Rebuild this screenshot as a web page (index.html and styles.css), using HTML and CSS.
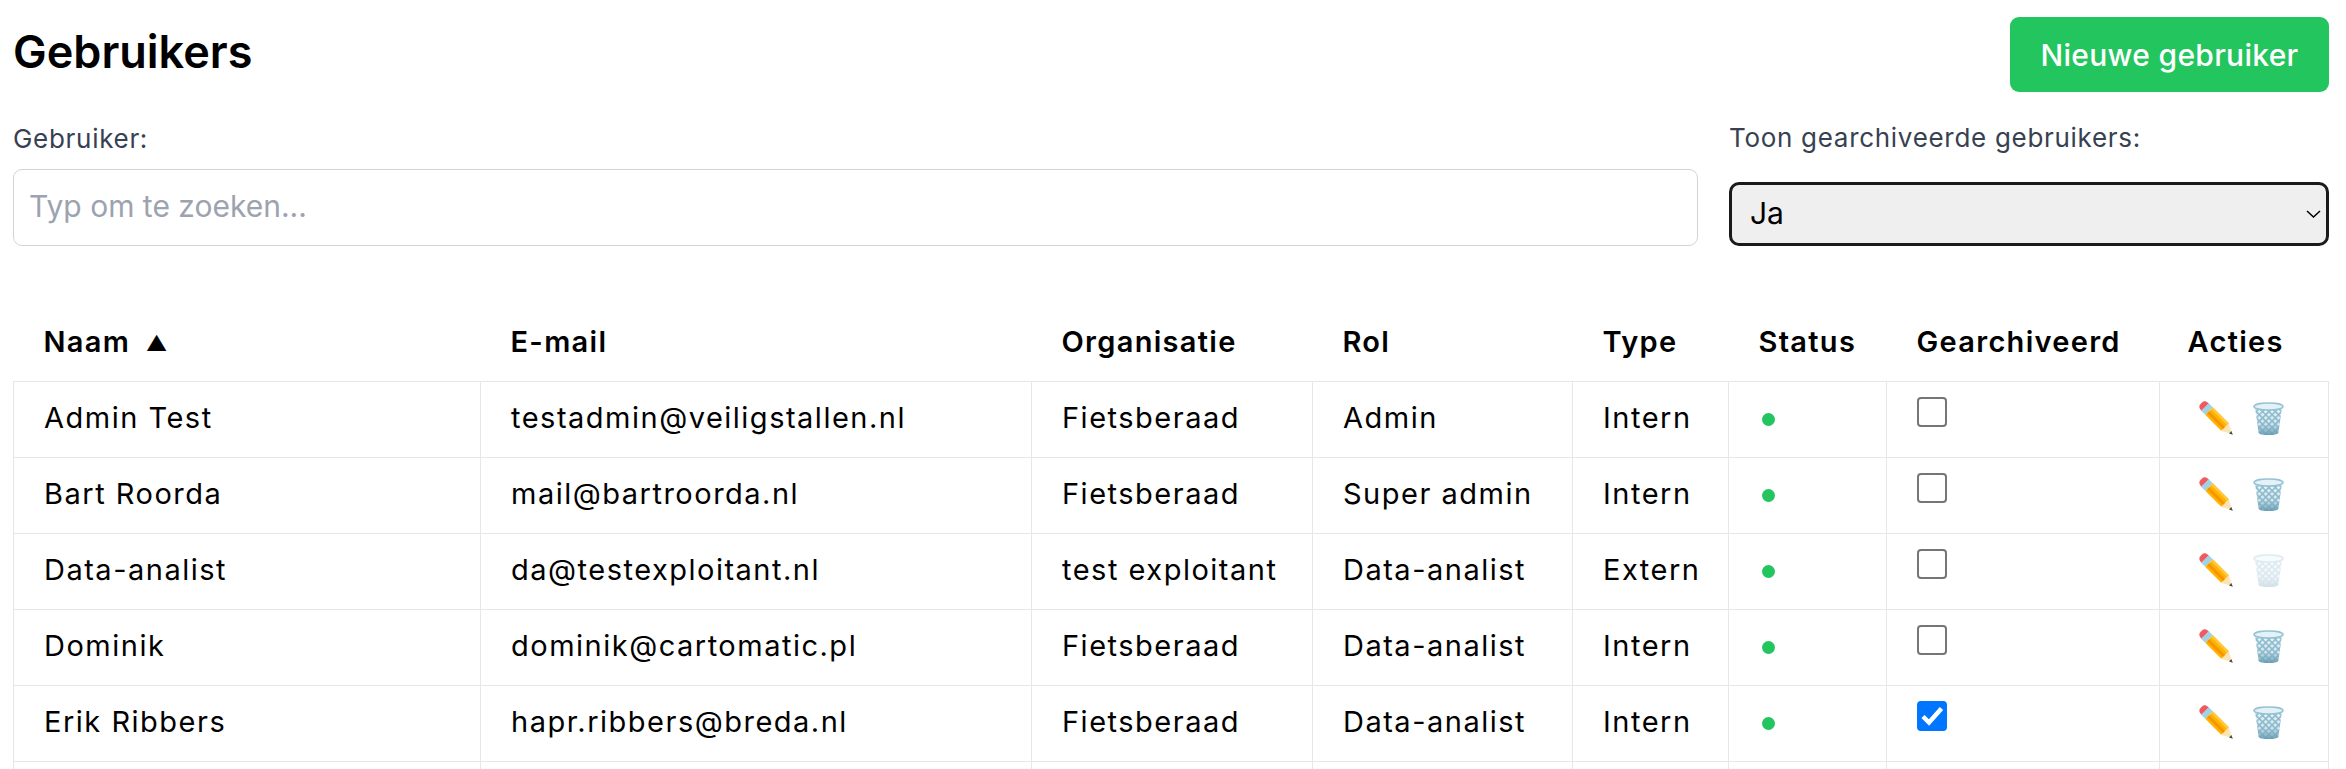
FILE: index.html
```html
<!DOCTYPE html>
<html lang="nl">
	<head>
		<meta charset="utf-8">
		<title>Gebruikers</title>
		<link rel="stylesheet" href="styles.css">
	</head>
	<body>
		<svg class="defs" width="0" height="0">
			<defs>
				<pattern id="mesh" width="4.500" height="4.500" patternUnits="userSpaceOnUse" patternTransform="rotate(45)">
					<rect width="4.500" height="4.500" fill="#8dbccf"/>
					<rect x="0.800" y="0.800" width="2.900" height="2.900" fill="#eef7fa"/>
				</pattern>
				<linearGradient id="fade" x1="0" y1="0" x2="0" y2="1">
					<stop offset="0" stop-color="#8dbccf" stop-opacity="0"/>
					<stop offset="0.6" stop-color="#7fb0c4" stop-opacity="0.25"/>
					<stop offset="1" stop-color="#6a9db3"/>
				</linearGradient>
				<symbol id="pencil" viewBox="0 0 34 34">
					<path d="M29.800 22.200 22.200 29.800 33.500 33.500z" fill="#fbe3b5"/>
					<path d="M32.400 30 30 32.400 33.800 33.800z" fill="#4a4a4a"/>
					<path d="M13.800 6.200 29.800 22.200 22.200 29.800 6.200 13.800z" fill="#ffb300"/>
					<path d="M13.800 6.200 29.800 22.200 28 24 12 8z" fill="#ffc93c"/>
					<path d="M10 10 26 26 24 28 8 12z" fill="#f59300"/>
					<path d="M9.800 2.200 13.800 6.200 6.200 13.800 2.200 9.800z" fill="#9fd3e4"/>
					<path d="M9.800 2.200 7 .6C5.500 0 4 .5 3 1.500L1.500 3C.5 4 0 5.500 .6 7L2.200 9.800z" fill="#ee5a63"/>
				</symbol>
				<symbol id="trash" viewBox="0 0 31 33">
					<path d="M2 5 5.500 30C5.800 32 8 33 15.500 33S25.200 32 25.500 30L29 5z" fill="url(#mesh)"/>
					<path d="M2 5 5.500 30C5.800 32 8 33 15.500 33S25.200 32 25.500 30L29 5z" fill="url(#fade)"/>
					<path d="M1 4.500C1 2.500 7.500 1 15.500 1S30 2.500 30 4.500 23.500 8 15.500 8 1 6.500 1 4.500z" fill="#e4f2f7" stroke="#94c3d4" stroke-width="1.500"/>
				</symbol>
			</defs>
		</svg>

		<div class="page">
			<div class="header">
				<h1 class="title">Gebruikers</h1>
				<button class="new_button" type="button">Nieuwe gebruiker</button>
			</div>

			<div class="filters">
				<div class="filter">
					<label class="filter_label label_search" for="search">Gebruiker:</label>
					<input class="search" id="search" type="text" placeholder="Typ om te zoeken...">
				</div>
				<div class="filter">
					<label class="filter_label label_select" for="archived">Toon gearchiveerde gebruikers:</label>
					<select class="archived" id="archived">
						<option>Ja</option>
						<option>Nee</option>
					</select>
				</div>
			</div>

			<table class="users">
				<colgroup>
					<col class="col_name">
					<col class="col_mail">
					<col class="col_org">
					<col class="col_role">
					<col class="col_type">
					<col class="col_status">
					<col class="col_archived">
					<col class="col_actions">
				</colgroup>
				<thead>
					<tr>
						<th>Naam <span class="sort">▲</span></th>
						<th>E-mail</th>
						<th>Organisatie</th>
						<th>Rol</th>
						<th>Type</th>
						<th>Status</th>
						<th>Gearchiveerd</th>
						<th class="th_actions">Acties</th>
					</tr>
				</thead>
				<tbody>
					<tr>
						<td>Admin Test</td>
						<td>testadmin@veiligstallen.nl</td>
						<td>Fietsberaad</td>
						<td>Admin</td>
						<td>Intern</td>
						<td><span class="dot"></span></td>
						<td class="check_cell"><input class="check" type="checkbox"></td>
						<td><div class="actions"><svg class="icon_pencil"><use href="#pencil"/></svg><svg class="icon_trash"><use href="#trash"/></svg></div></td>
					</tr>
					<tr>
						<td>Bart Roorda</td>
						<td>mail@bartroorda.nl</td>
						<td>Fietsberaad</td>
						<td>Super admin</td>
						<td>Intern</td>
						<td><span class="dot"></span></td>
						<td class="check_cell"><input class="check" type="checkbox"></td>
						<td><div class="actions"><svg class="icon_pencil"><use href="#pencil"/></svg><svg class="icon_trash"><use href="#trash"/></svg></div></td>
					</tr>
					<tr>
						<td>Data-analist</td>
						<td>da@testexploitant.nl</td>
						<td>test exploitant</td>
						<td>Data-analist</td>
						<td>Extern</td>
						<td><span class="dot"></span></td>
						<td class="check_cell"><input class="check" type="checkbox"></td>
						<td><div class="actions"><svg class="icon_pencil"><use href="#pencil"/></svg><svg class="icon_trash disabled"><use href="#trash"/></svg></div></td>
					</tr>
					<tr>
						<td>Dominik</td>
						<td>dominik@cartomatic.pl</td>
						<td>Fietsberaad</td>
						<td>Data-analist</td>
						<td>Intern</td>
						<td><span class="dot"></span></td>
						<td class="check_cell"><input class="check" type="checkbox"></td>
						<td><div class="actions"><svg class="icon_pencil"><use href="#pencil"/></svg><svg class="icon_trash"><use href="#trash"/></svg></div></td>
					</tr>
					<tr>
						<td>Erik Ribbers</td>
						<td>hapr.ribbers@breda.nl</td>
						<td>Fietsberaad</td>
						<td>Data-analist</td>
						<td>Intern</td>
						<td><span class="dot"></span></td>
						<td class="check_cell"><input class="check" type="checkbox" checked></td>
						<td><div class="actions"><svg class="icon_pencil"><use href="#pencil"/></svg><svg class="icon_trash"><use href="#trash"/></svg></div></td>
					</tr>
					<tr class="cut_row">
						<td></td><td></td><td></td><td></td><td></td><td></td><td></td><td></td>
					</tr>
				</tbody>
			</table>
		</div>
	</body>
</html>
```

FILE: styles.css
```css
* {
	box-sizing:border-box;
}

html, body {
	margin:0px;
	height:100%;
	overflow:hidden;
}

body {
	background:white;
	color:black;
	font-family:Inter, "Open Sans", sans-serif;
	font-size:24px;
}

.defs {
	display:block;
	height:0px;
}

.page {
	height:769px;
	overflow:hidden;
	padding:17px 17px 0px 13px;
}

.header {
	display:flex;
	justify-content:space-between;
	align-items:flex-start;
	margin-bottom:28px;
}

.title {
	margin:0px;
	font-size:45px;
	font-weight:600;
	line-height:70px;
}

.new_button {
	width:319px;
	height:75px;
	border:0px;
	border-radius:9px;
	background:#22c55e;
	color:white;
	font:inherit;
	font-size:30px;
	font-weight:500;
	letter-spacing:0.3px;
}

.filters {
	display:grid;
	grid-template-columns:1685px 600px;
	column-gap:31px;
	align-items:end;
}

.filter {
	display:flex;
	flex-direction:column;
}

.filter_label {
	color:#374151;
	line-height:36px;
	font-size:26px;
	letter-spacing:0.7px;
}
.label_search {
	margin-bottom:12px;
}
.label_select {
	margin-bottom:26px;
}

.search {
	height:77px;
	padding:0px 15px 4px;
	border:1px solid #d1d5db;
	border-radius:9px;
	font:inherit;
	font-size:30px;
	color:#111827;
}
	.search::placeholder {
		color:#9ca3af;
	}

.archived {
	height:64px;
	padding-left:18px;
	padding-bottom:2px;
	border:3px solid #1a1a1a;
	border-radius:10px;
	background-color:#efefef;
	background-image:url("data:image/svg+xml,%3Csvg xmlns='http://www.w3.org/2000/svg' width='15' height='8'%3E%3Cpath d='M1 1l6.500 6L14 1' fill='none' stroke='black' stroke-width='1.500'/%3E%3C/svg%3E");
	background-repeat:no-repeat;
	background-position:right 5px center;
	appearance:none;
	color:black;
	font:inherit;
	font-size:30px;
}

.users {
	table-layout:fixed;
	width:2315px;
	margin-top:59px;
	border-collapse:collapse;
}
	.col_name { width:467px; }
	.col_mail { width:551px; }
	.col_org { width:281px; }
	.col_role { width:260px; }
	.col_type { width:156px; }
	.col_status { width:158px; }
	.col_archived { width:273px; }
	.col_actions { width:169px; }

	.users th {
		height:76px;
		padding:0px 30px 2px;
		font-size:29px;
		font-weight:600;
		letter-spacing:1.3px;
		text-align:left;
		white-space:nowrap;
	}
	.users .th_actions {
		padding-left:28px;
	}
	.users td {
		height:76px;
		padding:0px 30px 4px;
		border:1px solid #e5e7eb;
		font-size:29px;
		letter-spacing:1.5px;
		white-space:nowrap;
	}
	.users .check_cell {
		vertical-align:top;
		padding-top:15px;
	}

.sort {
	margin-left:7px;
	font-size:21px;
	vertical-align:1px;
}

.dot {
	display:inline-block;
	width:13px;
	height:13px;
	margin-left:3px;
	border-radius:50%;
	background:#22c55e;
	vertical-align:middle;
}

.check {
	display:block;
	width:30px;
	height:30px;
	margin:0px;
	appearance:none;
	background:white;
	border:2px solid #767676;
	border-radius:4px;
}
	.check:checked {
		border:0px;
		background-color:#0075ff;
		background-image:url("data:image/svg+xml,%3Csvg xmlns='http://www.w3.org/2000/svg' width='30' height='30'%3E%3Cpath d='M6 15.500l6 6L24.500 7.500' fill='none' stroke='white' stroke-width='4.500'/%3E%3C/svg%3E");
	}

.actions {
	display:flex;
	align-items:center;
	gap:20px;
	padding-left:9px;
	padding-top:2px;
}

.icon_pencil {
	width:34px;
	height:34px;
}
.icon_trash {
	width:31px;
	height:33px;
}
.disabled {
	opacity:0.3;
}
```
